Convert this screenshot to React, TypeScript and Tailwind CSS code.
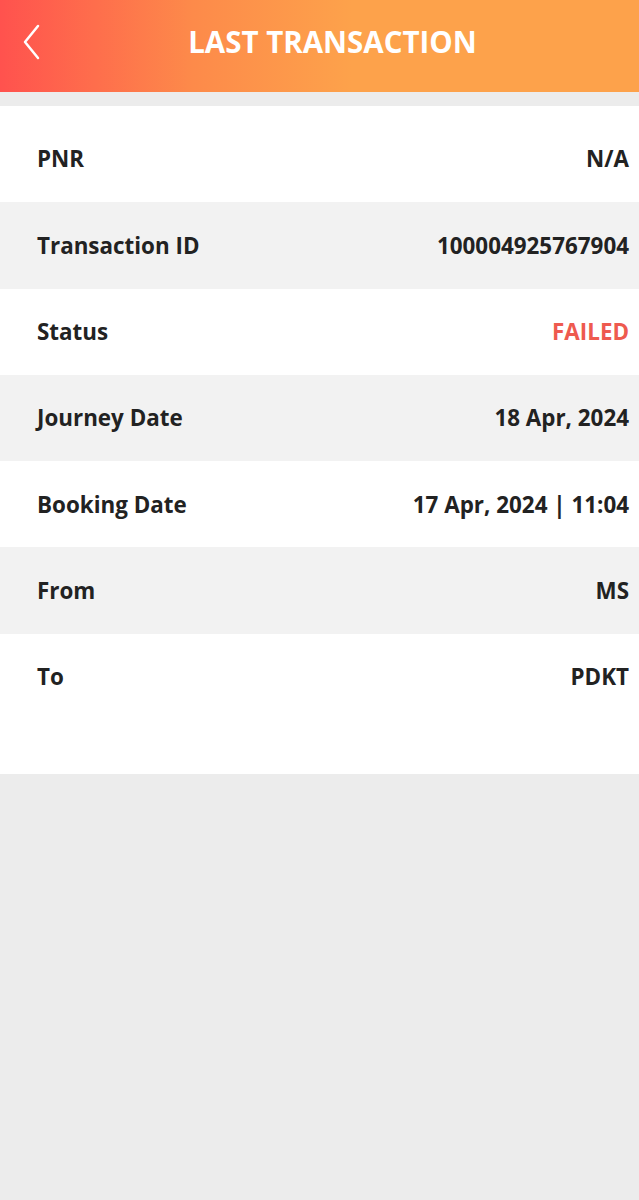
const rows: { label: string; value: string; red?: boolean }[] = [
    { label: 'PNR', value: 'N/A' },
    { label: 'Transaction ID', value: '100004925767904' },
    { label: 'Status', value: 'FAILED', red: true },
    { label: 'Journey Date', value: '18 Apr, 2024' },
    { label: 'Booking Date', value: '17 Apr, 2024 | 11:04' },
    { label: 'From', value: 'MS' },
    { label: 'To', value: 'PDKT' },
];

const App = () => {
    return (
        <div className="min-h-[1200px] bg-[#ececec] font-['Open_Sans',sans-serif]">
            <div className="relative flex h-[92px] items-center justify-center pb-[8px] pl-[26px] bg-[linear-gradient(90deg,#ff524e_0%,#fd8a4a_30%,#fda24b_55%,#fda24b_100%)]">
                <svg
                    className="absolute left-[22px] top-[24px]"
                    width="20"
                    height="36"
                    viewBox="0 0 20 36"
                    fill="none"
                    stroke="white"
                    strokeWidth="2.5"
                    strokeLinecap="round"
                    strokeLinejoin="round"
                >
                    <path d="M16 2 L3 18 L16 34" />
                </svg>
                <h1 className="text-[29.5px] font-bold text-white">LAST TRANSACTION</h1>
            </div>
            <div className="mt-[14px] bg-white pt-[10px] pb-[54px]">
                {rows.map((row, i) => (
                    <div
                        key={row.label}
                        className={`flex h-[86.3px] items-center justify-between pl-[37px] pr-[10px] text-[22.4px] font-bold text-[#222] ${
                            i % 2 === 1 ? 'bg-[#f2f2f2]' : 'bg-white'
                        }`}
                    >
                        <span>{row.label}</span>
                        <span className={row.red ? 'text-[#ee5a4f]' : ''}>{row.value}</span>
                    </div>
                ))}
            </div>
        </div>
    );
};

export default App;
